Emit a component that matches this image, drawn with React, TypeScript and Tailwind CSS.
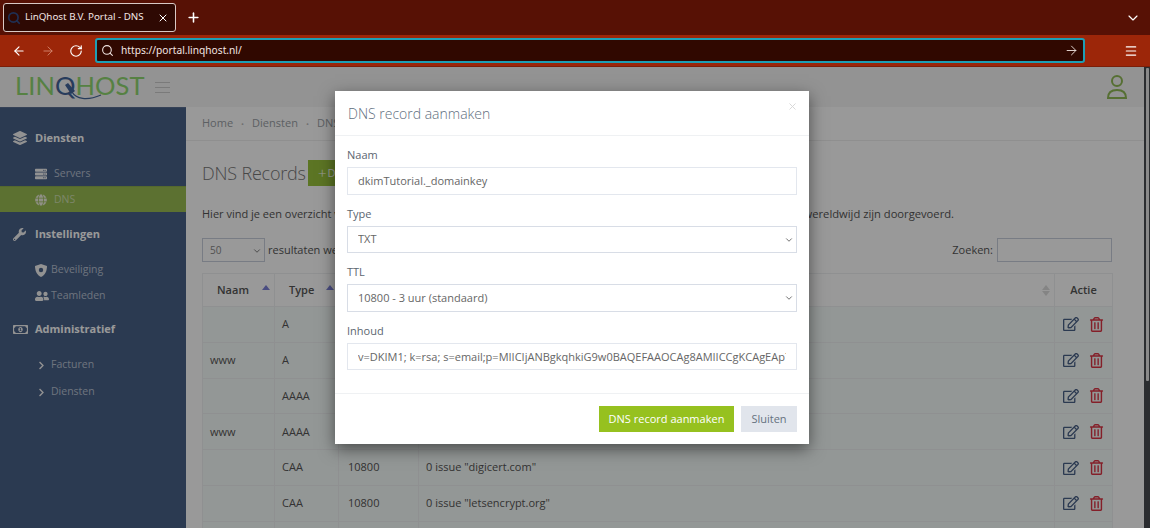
import { ArrowLeft, ArrowRight, ChevronDown, Menu, Plus, RotateCw, Search, X } from "lucide-react";
import { FaChevronRight, FaGlobe, FaLayerGroup, FaRegEdit, FaRegMoneyBillAlt, FaRegTrashAlt, FaServer, FaUserFriends, FaWrench } from "react-icons/fa";

const rows = [
  { naam: "", type: "A", ttl: "", inhoud: "" },
  { naam: "www", type: "A", ttl: "", inhoud: "" },
  { naam: "", type: "AAAA", ttl: "", inhoud: "" },
  { naam: "www", type: "AAAA", ttl: "", inhoud: "" },
  { naam: "", type: "CAA", ttl: "10800", inhoud: '0 issue "digicert.com"' },
  { naam: "", type: "CAA", ttl: "10800", inhoud: '0 issue "letsencrypt.org"' },
  { naam: "", type: "", ttl: "", inhoud: "" },
];

function BrowserChrome() {
  return (
    <div className="font-['Noto_Sans',sans-serif]">
      <div className="h-[35px] bg-[#571105] flex items-center pl-[3px] pr-[9px] text-white">
        <div className="w-[173px] h-[29px] rounded-[3px] border border-[#d9c9c5] bg-[#2e0903] flex items-center pl-[3px] pr-[6px]">
          <Search size={14} strokeWidth={3} className="text-[#1f2f52] shrink-0" />
          <span className="ml-[4px] text-[9.8px] whitespace-nowrap flex-1 text-[#f3e6e3]">LinQhost B.V. Portal - DNS</span>
          <X size={12} strokeWidth={2} />
        </div>
        <Plus size={15} strokeWidth={2.5} className="ml-[10px]" />
        <ChevronDown size={16} strokeWidth={1.75} className="ml-auto" />
      </div>
      <div className="h-[32px] bg-[#9c2609] flex items-center pl-[12px] pr-[12px] text-white border-b border-[#7c1e08]">
        <ArrowLeft size={14} strokeWidth={2} />
        <ArrowRight size={14} strokeWidth={1.5} className="ml-[15px] text-[#d68a72]" />
        <RotateCw size={14} strokeWidth={2} className="ml-[14px]" />
        <div className="ml-[12px] w-[990px] h-[25px] rounded-[3px] border-2 border-[#1d9fb5] bg-[#300800] flex items-center pl-[4px] pr-[4px]">
          <Search size={13} strokeWidth={2} className="text-[#f0e4e0]" />
          <span className="ml-[7px] text-[10.2px] text-[#f3e6e3]">https://portal.linqhost.nl/</span>
          <ArrowRight size={15} strokeWidth={1.5} className="ml-auto text-[#e8dcd8]" />
        </div>
        <Menu size={14} strokeWidth={2} className="ml-auto" />
      </div>
    </div>
  );
}

function Logo() {
  return (
    <div className="relative ml-[15px] w-[131px] h-[32px] flex items-center">
      <div className="font-['Lato',sans-serif] font-normal text-[25.5px] leading-[24px] tracking-[0.1px] text-[#90d870] whitespace-nowrap -mt-[4px]">
        LIN<span className="text-[#42649a]">Q</span>HOST
      </div>
      {/* plug and cable that run out of the Q */}
      <svg width="131" height="32" viewBox="0 0 131 32" className="absolute left-0 top-0" fill="none">
        <path d="M57 21 C61 28 72 30 86 24" stroke="#42649a" strokeWidth="1.3" />
        <path d="M50 14 L53 12 L60 20 L56 23 Z" fill="#42649a" />
      </svg>
    </div>
  );
}

function Header() {
  return (
    <div className="h-[40px] bg-[#f5f5f5] flex items-center shrink-0">
      <Logo />
      <div className="ml-[9px] w-[15px] flex flex-col gap-[4px]">
        <div className="h-px bg-[#cccccc]" />
        <div className="h-px bg-[#cccccc]" />
        <div className="h-px bg-[#cccccc]" />
      </div>
      <svg width="22" height="26" viewBox="0 0 22 26" fill="none" stroke="#8fba55" strokeWidth="2" className="ml-auto mr-[16px]">
        <circle cx="11" cy="7" r="5" />
        <path d="M2 24 C2 18 6 16 11 16 C16 16 20 18 20 24 Z" />
      </svg>
    </div>
  );
}

function ShieldIcon() {
  return (
    <svg width="12" height="13" viewBox="0 0 12 13" className="text-[#f3f3f3]">
      <path d="M6 0 L12 2 C12 7 10 11 6 13 C2 11 0 7 0 2 Z" fill="currentColor" />
      <circle cx="6" cy="6" r="2.2" fill="#496188" />
    </svg>
  );
}

function GroupTitle({ icon, label, className }: { icon: React.ReactNode; label: string; className?: string }) {
  return (
    <div className={"h-[36px] flex items-center pl-[13px] text-white font-bold text-[11px] " + (className ?? "")}>
      <span className="w-[22px] text-[#f3f3f3]">{icon}</span>
      {label}
    </div>
  );
}

function SubItem({ icon, label, active, gap }: { icon: React.ReactNode; label: string; active?: boolean; gap?: string }) {
  return (
    <div className={"h-[26px] flex items-center pl-[35px] text-[10.5px] " + (active ? "bg-[#99bc53] border-t border-[#8cae4e] text-[#d0e0b0]" : "pt-[2px] text-[#b8c2d2]")}>
      <span className={(gap ?? "w-[19px]") + " flex items-center " + (active ? "text-[#f0f0e0]" : "text-[#f3f3f3]")}>{icon}</span>
      {label}
    </div>
  );
}

function Sidebar() {
  return (
    <div className="w-[186px] shrink-0 bg-[#496188] pt-[12px] border-t border-[#5a6f92]">
      <GroupTitle icon={<FaLayerGroup size={14} />} label="Diensten" />
      <div className="mt-[4px]">
        <SubItem icon={<FaServer size={12} />} label="Servers" />
        <SubItem icon={<FaGlobe size={12} />} label="DNS" active />
      </div>
      <GroupTitle icon={<FaWrench size={13} />} label="Instellingen" className="mt-[4px]" />
      <div className="mt-[4px]">
        <SubItem icon={<ShieldIcon />} label="Beveiliging" gap="w-[16px]" />
        <SubItem icon={<FaUserFriends size={14} />} label="Teamleden" gap="w-[16px]" />
      </div>
      <GroupTitle icon={<FaRegMoneyBillAlt size={15} />} label="Administratief" className="mt-[3px]" />
      <div className="mt-[4px] flex flex-col gap-[1px]">
        <SubItem icon={<FaChevronRight size={9} className="ml-[2px]" />} label="Facturen" gap="w-[16px]" />
        <SubItem icon={<FaChevronRight size={9} className="ml-[2px]" />} label="Diensten" gap="w-[16px]" />
      </div>
    </div>
  );
}

function SortMark({ up }: { up?: boolean }) {
  return (
    <span className="absolute right-[4px] top-[11px] flex flex-col gap-[1px]">
      <span className={"w-0 h-0 border-x-[4px] border-x-transparent border-b-[5px] " + (up ? "border-b-[#7c80d8]" : "border-b-[#dddddd]")} />
      {!up && <span className="w-0 h-0 border-x-[4px] border-x-transparent border-t-[5px] border-t-[#dddddd]" />}
    </span>
  );
}

function RecordsTable() {
  return (
    <table className="w-[910px] table-fixed border-collapse text-[11px] text-[#555555] bg-[#f6fcfa] mt-[10px]">
      <colgroup>
        <col className="w-[72px]" />
        <col className="w-[64px]" />
        <col className="w-[80px]" />
        <col className="w-[636px]" />
        <col className="w-[58px]" />
      </colgroup>
      <thead>
        <tr className="h-[33px] bg-white text-[#555555] border border-[#eef0f2]">
          <th className="relative font-semibold border-r border-[#eef0f2] text-left pl-[14px]">Naam<SortMark up /></th>
          <th className="relative font-semibold border-r border-[#eef0f2] text-left pl-[14px]">Type<SortMark up /></th>
          <th className="relative font-semibold border-r border-[#eef0f2] text-left pl-[9px]">TTL</th>
          <th className="relative font-semibold border-r border-[#eef0f2] text-left pl-[9px]">Inhoud<SortMark /></th>
          <th className="font-semibold text-center">Actie</th>
        </tr>
      </thead>
      <tbody>
        {rows.map((r, i) => (
          <tr key={i} className="h-[35.8px] border border-[#eef0f2]">
            <td className="pl-[7px] border-r border-[#eef0f2]">{r.naam}</td>
            <td className="pl-[7px] border-r border-[#eef0f2]">{r.type}</td>
            <td className="pl-[9px] border-r border-[#eef0f2]">{r.ttl}</td>
            <td className="pl-[7px] border-r border-[#eef0f2]">{r.inhoud}</td>
            <td>
              <div className="flex items-center pl-[8px] gap-[10px]">
                <FaRegEdit size={16} className="text-[#496188]" />
                <FaRegTrashAlt size={15} className="text-[#dc3545]" />
              </div>
            </td>
          </tr>
        ))}
      </tbody>
    </table>
  );
}

function Content() {
  return (
    <div className="flex-1 min-w-0 bg-[#ffffff] text-[#555555]">
      <div className="h-[34px] pl-[16px] flex items-center text-[11px] text-[#9aa0a6] border-b border-[#eeeeee]">
        <span>Home</span>
        <span className="mx-[8px] text-[8px] text-[#bbbbbb]">•</span>
        <span>Diensten</span>
        <span className="mx-[8px] text-[8px] text-[#bbbbbb]">•</span>
        <span>DNS</span>
      </div>
      <div className="pl-[16px] pr-[32px]">
        <div className="mt-[19px] h-[26px] flex items-center">
          <h1 className="text-[18px] w-[102px] whitespace-nowrap font-light text-[#777777] leading-none tracking-[-0.2px]">DNS Records</h1>
          <button className="ml-[4px] h-[26px] px-[10px] bg-[#99c43c] text-white text-[11px] whitespace-nowrap flex items-center">
            <span className="text-[15px] font-light mr-[1px]">+</span>DNS record aanmaken
          </button>
        </div>
        <div className="mt-[19px] w-[752px] flex justify-between text-[11.2px] leading-[18px]">
          <span className="text-[11px]">Hier vind je een overzicht van je DNS records.</span>
          <span>wijzigingen wereldwijd zijn doorgevoerd.</span>
        </div>
        <div className="mt-[15px] h-[24px] flex items-center text-[11px] w-[910px]">
          <div className="relative">
            <select className="appearance-none block w-[63px] h-[24px] text-[10px] pl-[7px] border border-[#c9cfdc] bg-white text-[#888888]" defaultValue="50">
              <option>50</option>
            </select>
            <ChevronDown size={10} strokeWidth={2} className="absolute right-[3px] top-[8px] text-[#666666]" />
          </div>
          <span className="ml-[3px]">resultaten weergeven</span>
          <span className="ml-auto mr-[4px]">Zoeken:</span>
          <input readOnly className="w-[115px] h-[24px] border border-[#c9cfdc] bg-white" />
        </div>
        <div className="h-px" />
        <RecordsTable />
      </div>
    </div>
  );
}

function Field({ label, children }: { label: string; children: React.ReactNode }) {
  return (
    <div className="mb-[11.1px]">
      <label className="block text-[11px] leading-[16px] text-[#5c6670] mb-[4px]">{label}</label>
      {children}
    </div>
  );
}

function SelectBox({ children, value }: { children: React.ReactNode; value: string }) {
  return (
    <div className="relative">
      <select className="appearance-none block w-full h-[27.5px] pl-[10px] bg-white border border-[#d8dde6] text-[11px] text-[#666666] outline-none" defaultValue={value}>
        {children}
      </select>
      <ChevronDown size={10} strokeWidth={2} className="absolute right-[3px] top-[9px] text-[#555555]" />
    </div>
  );
}

function Modal() {
  const inputCls = "block w-full h-[27.5px] px-[10px] bg-white border border-[#e3e7ee] text-[11px] text-[#666666] outline-none";
  return (
    <div className="w-[474px] h-[353px] bg-white shadow-[0_5px_15px_rgba(0,0,0,0.5)] flex flex-col">
      <div className="relative h-[45px] shrink-0 flex items-center pl-[13px] pt-[1px] border-b border-[#eff1f3]">
        <span className="text-[14px] font-light text-[#5f6f80]">DNS record aanmaken</span>
        <X size={11} strokeWidth={2} className="absolute right-[11px] top-[10px] text-[#d5d5d5]" />
      </div>
      <div className="flex-1 px-[12px] pt-[11px]">
        <Field label="Naam">
          <input readOnly className={inputCls} value="dkimTutorial._domainkey" />
        </Field>
        <Field label="Type">
          <SelectBox value="TXT">
            <option>TXT</option>
          </SelectBox>
        </Field>
        <Field label="TTL">
          <SelectBox value="10800">
            <option value="10800">10800 - 3 uur (standaard)</option>
          </SelectBox>
        </Field>
        <Field label="Inhoud">
          <input readOnly className={inputCls} value="v=DKIM1; k=rsa; s=email;p=MIICIjANBgkqhkiG9w0BAQEFAAOCAg8AMIICCgKCAgEAp7vQk2mXw4bY" />
        </Field>
      </div>
      <div className="h-[51px] shrink-0 border-t border-[#eff1f3] flex items-center justify-end gap-[7px] pr-[12px]">
        <button className="h-[26px] w-[135px] bg-[#96c11f] text-white text-[11px]">DNS record aanmaken</button>
        <button className="h-[26px] w-[56px] bg-[#e1e5ec] text-[#66727f] text-[11px]">Sluiten</button>
      </div>
    </div>
  );
}

export default function App() {
  return (
    <div className="w-[1150px] h-[528px] overflow-hidden flex flex-col font-['Open_Sans',sans-serif]">
      <BrowserChrome />
      <div className="flex-1 min-h-0 flex">
        <div className="relative flex-1 min-w-0 flex flex-col overflow-hidden">
          <Header />
          <div className="flex-1 min-h-0 flex">
            <Sidebar />
            <Content />
          </div>
          <div className="absolute inset-0 bg-black/40 flex justify-center pt-[24px]">
            <Modal />
          </div>
        </div>
        <div className="w-[6px] shrink-0 bg-[#2b2d30] pt-[1px]">
          <div className="ml-[2px] w-[3px] h-[313px] rounded-[1px] bg-[#8a8a8a]" />
        </div>
      </div>
    </div>
  );
}
